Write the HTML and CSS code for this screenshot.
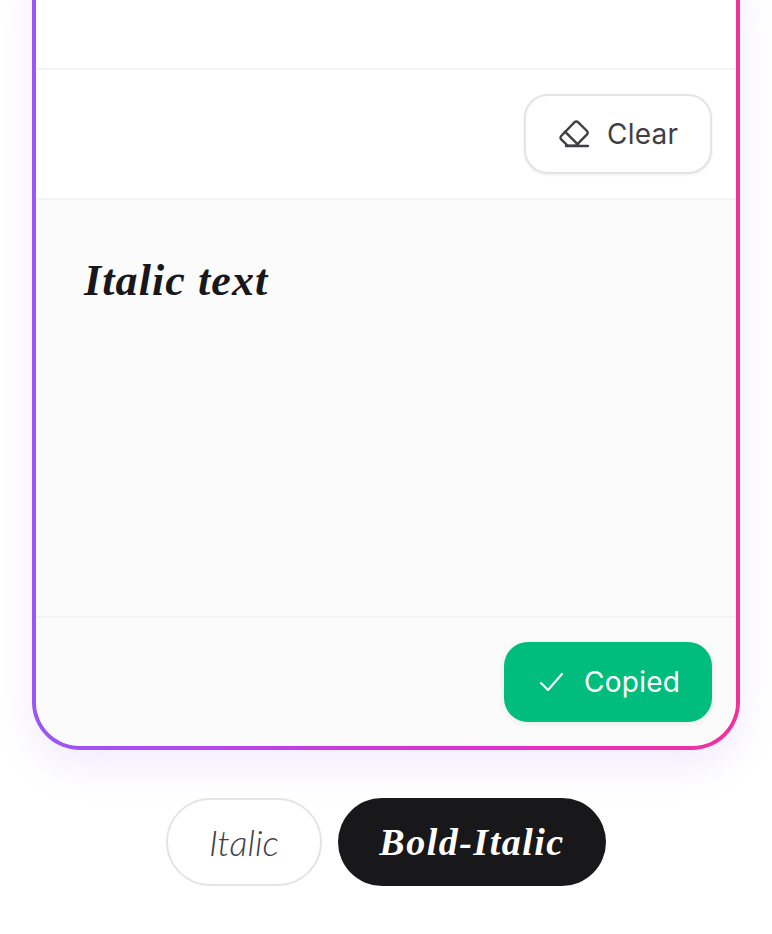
FILE: index.html
```html
<!DOCTYPE html>
<html lang="en">
<head>
    <meta charset="UTF-8">
    <meta name="viewport" content="width=device-width, initial-scale=1.0">
    <title>Italic Text Generator</title>
    <link rel="stylesheet" href="styles.css">
</head>
<body>
    <div class="card">
        <div class="input-area"></div>
        <div class="toolbar toolbar-input">
            <button class="btn btn-clear">
                <svg class="icon" width="32" height="32" viewBox="0 0 32 32" fill="none" stroke="currentColor" stroke-width="2.4" stroke-linecap="round" stroke-linejoin="round">
                    <path d="M8 28h22"/>
                    <path d="M16.6 4.2a2.4 2.4 0 0 1 3.4 0l9 8.8a2.4 2.4 0 0 1 0 3.4L18 27.6H9.6L3.2 21.4a2.4 2.4 0 0 1 0-3.4z"/>
                    <path d="M7 13.6l13 13"/>
                </svg>
                Clear
            </button>
        </div>
        <div class="output-area">
            <p class="output-text">Italic text</p>
        </div>
        <div class="toolbar toolbar-output">
            <button class="btn btn-copied">
                <svg class="icon" width="28" height="28" viewBox="0 0 28 28" fill="none" stroke="currentColor" stroke-width="2.2" stroke-linecap="round" stroke-linejoin="round">
                    <path d="M3 15l7 7L24 6"/>
                </svg>
                Copied
            </button>
        </div>
    </div>

    <div class="styles">
        <button class="chip">Italic</button>
        <button class="chip chip-active">Bold-Italic</button>
    </div>
</body>
</html>
```

FILE: styles.css
```css
* {
    margin: 0;
    padding: 0;
    box-sizing: border-box;
}

html, body {
    height: 934px;
    overflow: hidden;
}

body {
    display: flex;
    flex-direction: column;
    justify-content: flex-end;
    align-items: center;
    padding: 0 32px 48px;
    background: #fff;
    font-family: Inter, "Liberation Sans", sans-serif;
}

.card {
    flex-shrink: 0;
    width: 708px;
    border: 4px solid transparent;
    border-radius: 48px;
    background:
        linear-gradient(#fff, #fff) padding-box,
        linear-gradient(to right, #9a56f6, #e22fd0 65%, #ef339b) border-box;
    box-shadow: 0 16px 40px rgba(139, 92, 246, 0.12);
    overflow: hidden;
}

.input-area {
    height: 120px;
    background: #fff;
}

.toolbar {
    display: flex;
    justify-content: flex-end;
    align-items: center;
    height: 130px;
    padding: 0 24px;
    border-top: 2px solid #f4f4f5;
}

.toolbar-output {
    background: #fbfbfb;
    height: 130px;
}

.output-area {
    height: 418px;
    padding: 55px 48px;
    background: #fbfbfb;
    border-top: 2px solid #f4f4f5;
}

.output-text {
    font-family: "Liberation Serif", serif;
    font-style: italic;
    font-weight: 700;
    font-size: 44px;
    line-height: 52px;
    letter-spacing: 1.1px;
    color: #18181b;
}

.btn {
    display: flex;
    align-items: center;
    height: 80px;
    font-family: Inter, "Liberation Sans", sans-serif;
    font-size: 28px;
    letter-spacing: 0.25px;
    border-radius: 24px;
    cursor: pointer;
}

.btn-clear {
    gap: 17px;
    width: 188px;
    padding-left: 32px;
    color: #3f3f46;
    background: #fff;
    border: 2px solid #e4e4e7;
    box-shadow: 0 1px 3px rgba(0, 0, 0, 0.08);
}

.btn-copied {
    gap: 18px;
    width: 208px;
    padding-left: 34px;
    color: #fff;
    background: #00bc7d;
    border: none;
    box-shadow: 0 2px 6px rgba(0, 0, 0, 0.08);
}

.styles {
    display: flex;
    justify-content: center;
    gap: 16px;
    margin-top: 48px;
}

.chip {
    height: 88px;
    border-radius: 44px;
    font-size: 36px;
    font-style: italic;
    cursor: pointer;
}

.chip:not(.chip-active) {
    width: 156px;
    font-family: Lato, sans-serif;
    font-weight: 300;
    font-size: 36px;
    color: #3f3f46;
    background: #fff;
    border: 2px solid #e4e4e7;
}

.chip-active {
    width: 268px;
    font-family: "Liberation Serif", serif;
    font-weight: 700;
    font-size: 38px;
    letter-spacing: 1.5px;
    color: #fff;
    background: #18181b;
    border: none;
}
```
